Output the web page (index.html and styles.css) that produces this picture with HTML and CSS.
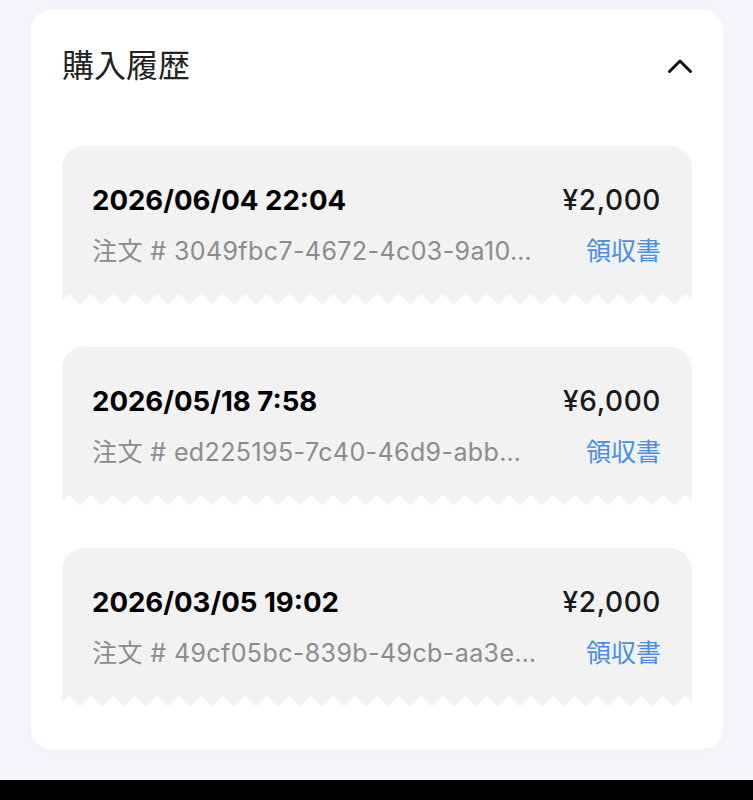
FILE: index.html
```html
<!DOCTYPE html>
<html lang="ja">
<head>
<meta charset="utf-8">
<title>購入履歴</title>
<link rel="stylesheet" href="styles.css">
</head>
<body>
<main class="page">
  <section class="panel">
    <header class="panel-head">
      <h2 class="panel-title">購入履歴</h2>
      <svg class="chevron" width="26" height="16" viewBox="0 0 26 16" aria-hidden="true">
        <polyline points="2.5,13.5 13,3 23.5,13.5" fill="none" stroke="#111" stroke-width="3" stroke-linecap="round" stroke-linejoin="round"/>
      </svg>
    </header>
    <ul class="receipts">
      <li class="receipt">
        <div class="receipt-body">
          <div class="row">
            <span class="date">2026/06/04 22:04</span>
            <span class="price">¥2,000</span>
          </div>
          <div class="row">
            <span class="order">注文 # 3049fbc7-4672-4c03-9a10…</span>
            <a class="link" href="#">領収書</a>
          </div>
        </div>
        <div class="teeth"></div>
      </li>
      <li class="receipt">
        <div class="receipt-body">
          <div class="row">
            <span class="date">2026/05/18 7:58</span>
            <span class="price">¥6,000</span>
          </div>
          <div class="row">
            <span class="order">注文 # ed225195-7c40-46d9-abb…</span>
            <a class="link" href="#">領収書</a>
          </div>
        </div>
        <div class="teeth"></div>
      </li>
      <li class="receipt">
        <div class="receipt-body">
          <div class="row">
            <span class="date">2026/03/05 19:02</span>
            <span class="price">¥2,000</span>
          </div>
          <div class="row">
            <span class="order">注文 # 49cf05bc-839b-49cb-aa3e…</span>
            <a class="link" href="#">領収書</a>
          </div>
        </div>
        <div class="teeth"></div>
      </li>
    </ul>
  </section>
</main>
<div class="home-bar"></div>
</body>
</html>
```

FILE: styles.css
```css
* { box-sizing: border-box; }

html, body {
  margin: 0;
  padding: 0;
}

body {
  height: 800px;
  display: flex;
  flex-direction: column;
  background: #f6f6fb;
  font-family: Inter, "Noto Sans CJK JP", sans-serif;
  color: #111;
}

.page {
  flex: 1;
  padding: 10px 30px 0 31px;
}

.panel {
  width: 692px;
  background: #fff;
  border-radius: 20px;
  box-shadow: 0 0 24px rgba(120, 120, 190, 0.06);
  padding: 0 31px 43px;
}

.panel-head {
  height: 112px;
  display: flex;
  align-items: center;
  justify-content: space-between;
}

.panel-title {
  margin: 0;
  font-size: 32px;
  font-weight: 400;
  line-height: 36px;
  color: #222;
}

.chevron {
  display: block;
  margin-right: -1px;
}

.receipts {
  list-style: none;
  margin: 24px 0 0;
  padding: 0;
  display: flex;
  flex-direction: column;
  gap: 43px;
}

.receipt {
  display: flex;
  flex-direction: column;
}

.receipt-body {
  height: 147px;
  background: #f2f2f2;
  border-radius: 22px 22px 0 0;
  padding: 38px 31px 0 30px;
}

.teeth {
  height: 11px;
  background: conic-gradient(from -45deg at 50% 100%, #f2f2f2 90deg, transparent 0) 7px 0 / 22px 11px repeat-x;
}

.row {
  display: flex;
  align-items: baseline;
  justify-content: space-between;
}

.row + .row {
  margin-top: 20px;
}

.date {
  font-size: 27.6px;
  line-height: 32px;
  font-weight: 700;
  color: #000;
}

.price {
  font-size: 28px;
  line-height: 32px;
  font-weight: 500;
  letter-spacing: 0.6px;
  color: #1a1a1a;
}

.order {
  flex: 1;
  min-width: 0;
  font-size: 25px;
  line-height: 30px;
  letter-spacing: 0.4px;
  color: #8c8c8c;
  white-space: nowrap;
  overflow: hidden;
  text-overflow: ellipsis;
  margin-right: 30px;
}

.link {
  font-size: 25px;
  line-height: 30px;
  color: #4a8fe0;
  text-decoration: none;
}

.home-bar {
  height: 20px;
  background: #000;
}
```
